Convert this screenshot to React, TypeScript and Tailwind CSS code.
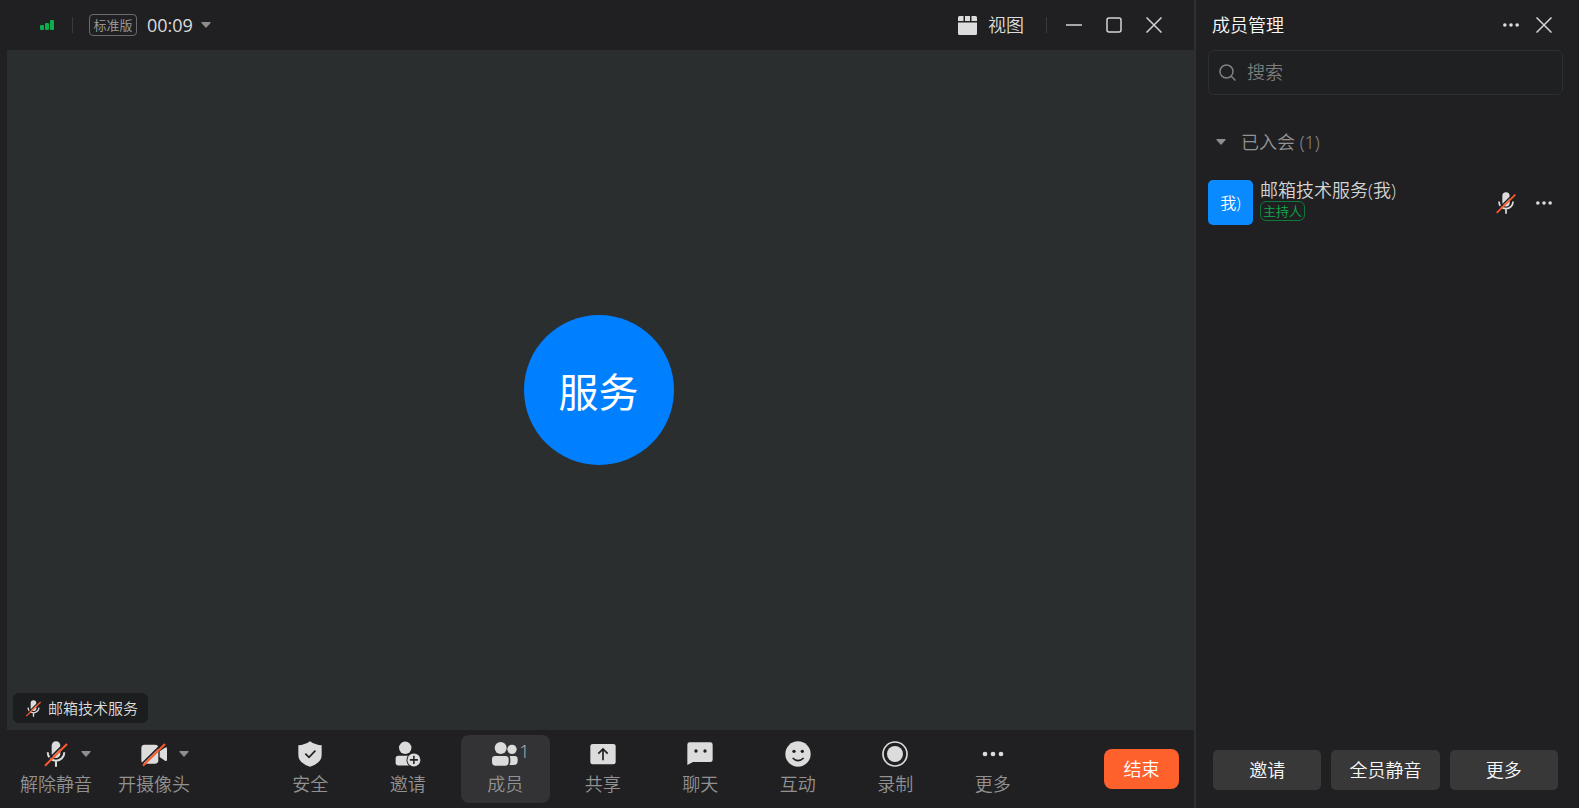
import React from 'react';

type IconProps = { className?: string };

const MicOffIcon: React.FC<IconProps> = ({ className }) => (
  <svg viewBox="0 0 78 78" className={className} fill="none" aria-hidden="true">
    <rect x="26" y="1" width="26" height="50" rx="13" fill="#dcdcdc" />
    <path d="M14 34a25 25 0 0 0 50 0M39 59v18" stroke="#dcdcdc" strokeWidth="6" />
    <path d="M1 70L67 5" stroke="#202022" strokeWidth="5" />
    <path d="M6 74L72 9" stroke="#ff5a2b" strokeWidth="6" />
  </svg>
);

const CameraOffIcon: React.FC<IconProps> = ({ className }) => (
  <svg viewBox="0 0 78 78" className={className} fill="none" aria-hidden="true">
    <rect x="1" y="11" width="51" height="57" rx="10" fill="#dcdcdc" />
    <path d="M56 31L72 20q6-3 6 3v33q0 6-6 3L56 48z" fill="#dcdcdc" />
    <path d="M1 70L67 5" stroke="#202022" strokeWidth="5" />
    <path d="M6 74L72 9" stroke="#ff5a2b" strokeWidth="6" />
  </svg>
);

const ShieldIcon: React.FC<IconProps> = ({ className }) => (
  <svg viewBox="0 0 78 78" className={className} fill="none" aria-hidden="true">
    <path d="M39 1Q55 12 74 13V42Q74 66 39 77Q4 66 4 42V13Q23 12 39 1Z" fill="#dcdcdc" />
    <path d="M25 38l11 11 19-20" stroke="#202022" strokeWidth="5" />
  </svg>
);

const InviteIcon: React.FC<IconProps> = ({ className }) => (
  <svg viewBox="0 0 84 84" className={className} fill="none" aria-hidden="true">
    <circle cx="33" cy="22" r="20" fill="#dcdcdc" />
    <path d="M2 57q0-9 9-9h34v31H11q-9 0-9-9z" fill="#dcdcdc" />
    <circle cx="61" cy="61" r="24" fill="#202022" />
    <circle cx="61" cy="61" r="21" fill="#dcdcdc" />
    <path d="M61 48v26M48 61h26" stroke="#202022" strokeWidth="5" />
  </svg>
);

const MembersIcon: React.FC<IconProps> = ({ className }) => (
  <svg viewBox="0 0 78 78" className={className} fill="#dcdcdc" aria-hidden="true">
    <circle cx="26" cy="21" r="18" />
    <circle cx="60" cy="25" r="14" />
    <path d="M0 55q0-10 10-10h30q10 0 10 10v8q0 11-11 11H11Q0 74 0 63z" />
    <path d="M53 45h15q9 0 9 9v6q0 12-12 12H52q3-4 3-9v-9q0-5-2-9z" />
  </svg>
);

const ShareIcon: React.FC<IconProps> = ({ className }) => (
  <svg viewBox="0 0 78 78" className={className} fill="none" aria-hidden="true">
    <rect x="1" y="9" width="76" height="61" rx="7" fill="#dcdcdc" />
    <path d="M39 58V25M25 38l14-14 14 14" stroke="#202022" strokeWidth="5" />
  </svg>
);

const ChatIcon: React.FC<IconProps> = ({ className }) => (
  <svg viewBox="0 0 78 78" className={className} fill="#dcdcdc" aria-hidden="true">
    <path d="M8 4h62q7 0 7 7v45q0 7-7 7H18L1 72V11q0-7 7-7z" />
    <circle cx="27" cy="30" r="5" fill="#202022" />
    <circle cx="54" cy="30" r="5" fill="#202022" />
  </svg>
);

const SmileIcon: React.FC<IconProps> = ({ className }) => (
  <svg viewBox="0 0 78 78" className={className} fill="none" aria-hidden="true">
    <circle cx="39" cy="39" r="38" fill="#dcdcdc" />
    <circle cx="27" cy="31" r="5" fill="#202022" />
    <circle cx="52" cy="31" r="5" fill="#202022" />
    <path d="M23 51q16 16 33 0" stroke="#202022" strokeWidth="5" />
  </svg>
);

const RecordIcon: React.FC<IconProps> = ({ className }) => (
  <svg viewBox="0 0 78 78" className={className} fill="none" aria-hidden="true">
    <circle cx="39" cy="39" r="36" stroke="#dcdcdc" strokeWidth="5" />
    <circle cx="39" cy="39" r="24" fill="#dcdcdc" />
  </svg>
);

const DotsIcon: React.FC<IconProps> = ({ className }) => (
  <svg viewBox="0 0 78 78" className={className} fill="#dcdcdc" aria-hidden="true">
    <circle cx="15" cy="39" r="7" />
    <circle cx="39" cy="39" r="7" />
    <circle cx="63" cy="39" r="7" />
  </svg>
);

const Caret: React.FC<IconProps> = ({ className }) => (
  <svg viewBox="0 0 20 12" className={className} fill="#8e8e8e" aria-hidden="true">
    <path d="M2 0h16q2 0 1 2l-8 9q-1 1-2 0L1 2Q0 0 2 0z" />
  </svg>
);

const CloseIcon: React.FC<IconProps> = ({ className }) => (
  <svg viewBox="0 0 32 32" className={className} fill="none" stroke="#d4d4d4" strokeWidth="3" aria-hidden="true">
    <path d="M1 1l30 30M31 1L1 31" />
  </svg>
);

interface ToolItem {
  label: string;
  icon: React.FC<IconProps>;
  count?: number;
  active?: boolean;
}

const deviceItems: ToolItem[] = [
  { label: '解除静音', icon: MicOffIcon },
  { label: '开摄像头', icon: CameraOffIcon },
];

const toolItems: ToolItem[] = [
  { label: '安全', icon: ShieldIcon },
  { label: '邀请', icon: InviteIcon },
  { label: '成员', icon: MembersIcon, count: 1, active: true },
  { label: '共享', icon: ShareIcon },
  { label: '聊天', icon: ChatIcon },
  { label: '互动', icon: SmileIcon },
  { label: '录制', icon: RecordIcon },
  { label: '更多', icon: DotsIcon },
];

const ToolButton: React.FC<{ item: ToolItem; hasMenu?: boolean }> = ({ item, hasMenu }) => {
  const Icon = item.icon;
  return (
    <button
      type="button"
      className={`mx-1 h-[68px] flex flex-col items-stretch rounded-lg pt-[6px] ${item.active ? 'bg-[#333335]' : ''}`}
    >
      <span className="grid grid-cols-[1fr_26px_1fr] items-center h-[26px]">
        <span />
        <Icon className="size-[26px]" />
        {hasMenu && <Caret className="ml-3 w-[10px] h-[6px]" />}
        {item.count !== undefined && (
          <span className="self-start ml-px text-left text-lg leading-5 text-[#b8b8b8]">{item.count}</span>
        )}
      </span>
      <span className="mt-1 text-center text-lg leading-[26px] text-[#929292] whitespace-nowrap">{item.label}</span>
    </button>
  );
};

const TitleBar: React.FC = () => (
  <header className="h-[50px] shrink-0 flex items-center justify-between pl-10 pr-8">
    <div className="flex items-center">
      <svg viewBox="0 0 14 10" className="w-[14px] h-[10px]" fill="#0cae4c" aria-hidden="true">
        <rect x="0" y="5" width="4" height="5" rx="1" />
        <rect x="5" y="3" width="4" height="7" rx="1" />
        <rect x="10" y="0" width="4" height="10" rx="1" />
      </svg>
      <span className="ml-[18px] w-px h-4 bg-[#3a3a3c]" />
      <span className="ml-4 w-12 h-[22px] rounded border border-[#6a6a6c] text-center text-[13px] leading-5 text-[#a0a0a0]">
        标准版
      </span>
      <button type="button" className="ml-[10px] flex items-center gap-2">
        <span className="text-lg leading-6 font-normal text-[#dcdcdc]">00:09</span>
        <Caret className="w-[10px] h-[6px]" />
      </button>
    </div>
    <div className="flex items-center">
      <button type="button" className="flex items-center gap-[11px] text-lg text-[#dcdcdc]">
        <svg viewBox="0 0 38 38" className="size-[19px]" fill="#dcdcdc" aria-hidden="true">
          <path d="M3 0h8v10H0V3Q0 0 3 0zM14 0h10v10H14zM27 0h8q3 0 3 3v7H27zM0 13h38v22q0 3-3 3H3q-3 0-3-3z" />
        </svg>
        视图
      </button>
      <span className="ml-[22px] w-px h-4 bg-[#3a3a3c]" />
      <button type="button" aria-label="最小化" className="ml-[19px]">
        <svg viewBox="0 0 32 32" className="size-4" stroke="#d4d4d4" strokeWidth="3" aria-hidden="true">
          <path d="M0 16h32" />
        </svg>
      </button>
      <button type="button" aria-label="最大化" className="ml-6">
        <svg viewBox="0 0 32 32" className="size-4" fill="none" stroke="#d4d4d4" strokeWidth="3" aria-hidden="true">
          <rect x="2" y="2" width="28" height="28" rx="4" />
        </svg>
      </button>
      <button type="button" aria-label="关闭" className="ml-6">
        <CloseIcon className="size-4" />
      </button>
    </div>
  </header>
);

const Stage: React.FC = () => (
  <main className="relative ml-[7px] pr-1 flex-1 flex items-center justify-center bg-[#2a2e2f]">
    <div className="size-[150px] pt-1 rounded-full bg-[#007fff] flex items-center justify-center text-[40px] font-normal text-white">
      服务
    </div>
    <div className="absolute left-[6px] bottom-[7px] h-[30px] pl-3 pr-[10px] flex items-center gap-[6px] rounded-md bg-[#1b1d1e] text-[15px] text-[#dcdcdc]">
      <MicOffIcon className="size-[17px]" />
      邮箱技术服务
    </div>
  </main>
);

const Toolbar: React.FC = () => (
  <footer className="h-[78px] shrink-0 flex items-center justify-between pl-[7px] pr-[15px]">
    <div className="grid grid-cols-2 w-[196px]">
      {deviceItems.map((item) => (
        <ToolButton key={item.label} item={item} hasMenu />
      ))}
    </div>
    <div className="grid grid-cols-8 w-[780px] mr-1">
      {toolItems.map((item) => (
        <ToolButton key={item.label} item={item} />
      ))}
    </div>
    <button type="button" className="w-[75px] h-10 rounded-lg bg-[#ff612c] text-lg text-white">
      结束
    </button>
  </footer>
);

const MemberPanel: React.FC = () => (
  <aside className="w-[385px] shrink-0 flex flex-col border-l-2 border-[#2d3032]">
    <div className="h-[50px] flex items-center pl-4 pr-[27px]">
      <h2 className="flex-1 text-lg text-[#f8f8f8]">成员管理</h2>
      <button type="button" aria-label="更多选项">
        <DotsIcon className="size-5" />
      </button>
      <button type="button" aria-label="关闭成员管理" className="ml-[15px]">
        <CloseIcon className="size-4" />
      </button>
    </div>
    <label className="ml-3 mr-4 h-[45px] flex items-center gap-[11px] rounded-md border border-[#2b2f31] bg-[#1e2021] pl-[10px] pr-3">
      <svg viewBox="0 0 34 34" className="size-[17px] shrink-0" fill="none" stroke="#808080" strokeWidth="3" aria-hidden="true">
        <circle cx="15" cy="15" r="13" />
        <path d="M24 24l9 9" />
      </svg>
      <input
        type="text"
        aria-label="搜索"
        placeholder="搜索"
        className="min-w-0 flex-1 pb-[2px] bg-transparent text-lg text-[#dcdcdc] placeholder:text-[#7c7c7c] outline-none"
      />
    </label>
    <button type="button" className="mt-[31px] h-8 flex items-center gap-[15px] pl-5 text-lg text-[#929292]">
      <Caret className="w-[10px] h-[6px]" />
      已入会 (1)
    </button>
    <ul className="mt-[22px] flex-1">
      <li className="flex items-center pl-3 pr-[25px]">
        <span className="size-[45px] rounded-[5px] bg-[#0a8aff] flex items-center justify-center text-base text-white">
          我)
        </span>
        <div className="ml-[7px] flex-1 self-start flex flex-col items-start">
          <span className="text-lg leading-[21px] text-[#d4d4d4]">邮箱技术服务(我)</span>
          <span className="h-5 rounded-md border border-[#0b7a3a] px-[2px] text-[13px] leading-[18px] text-[#0cae4c]">
            主持人
          </span>
        </div>
        <button type="button" aria-label="解除静音">
          <MicOffIcon className="size-[22px]" />
        </button>
        <button type="button" aria-label="成员选项" className="ml-[17px]">
          <DotsIcon className="size-5" />
        </button>
      </li>
    </ul>
    <div className="grid grid-cols-3 gap-[10px] pl-[17px] pr-[21px] mb-[18px]">
      {['邀请', '全员静音', '更多'].map((label) => (
        <button key={label} type="button" className="h-10 rounded-[5px] bg-[#383838] text-lg text-[#f8f8f8]">
          {label}
        </button>
      ))}
    </div>
  </aside>
);

const App: React.FC = () => (
  <div className="h-screen flex bg-[#202022] font-['Open_Sans','Noto_Sans_CJK_SC',sans-serif] font-[350]">
    <div className="flex-1 min-w-0 flex flex-col">
      <TitleBar />
      <Stage />
      <Toolbar />
    </div>
    <MemberPanel />
  </div>
);

export default App;
